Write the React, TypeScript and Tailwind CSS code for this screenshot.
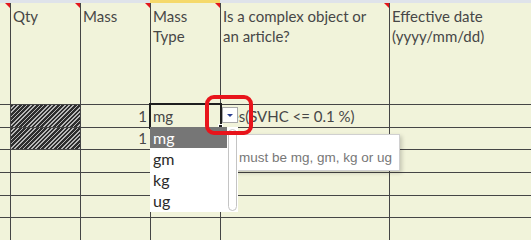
import React from 'react';

const line = 'border-[#454545]';

function Cell({ children, last, className = '' }: { children?: React.ReactNode; last?: boolean; className?: string }) {
  return (
    <div className={`relative border-b ${last ? '' : 'border-r'} ${line} ${className}`}>{children}</div>
  );
}

// red comment marker in the top-right corner of a header cell
function Marker() {
  return (
    <span className="absolute top-0 right-0 w-0 h-0 border-t-[5px] border-l-[5px] border-t-[#e3161b] border-l-transparent" />
  );
}

const hatch = 'bg-[repeating-linear-gradient(135deg,#2e2e2e_0_1.8px,#b8b8b8_1.8px_3px)]';

export default function App() {
  const emptyRows = [23, 23, 22, 23];

  return (
    <div className="relative w-[531px] h-[240px] overflow-hidden bg-[#f1f3da] text-[#474747] font-['Lato','Liberation_Sans',sans-serif] text-[15px]">
      {/* column header strip */}
      <div className="flex h-[3px]">
        <div className="w-[150px] bg-[#dfe3ea]" />
        <div className="w-[70px] bg-[#f5d96b]" />
        <div className="flex-1 bg-[#dfe3ea]" />
      </div>

      <div className="grid grid-cols-[11px_70px_70px_70px_169px_141px] grid-rows-[102px_23px_22px]">
        {/* header row */}
        <Cell><Marker /></Cell>
        <Cell className="pl-[2px] pt-[3px] leading-[20px]">Qty<Marker /></Cell>
        <Cell className="pl-[2px] pt-[3px] leading-[20px]">Mass<Marker /></Cell>
        <Cell className="pl-[2px] pt-[3px] leading-[20px]">Mass<br />Type<Marker /></Cell>
        <Cell className="pl-[2px] pt-[3px] leading-[20px]">Is a complex object or<br />an article?<Marker /></Cell>
        <Cell last className="pl-[2px] pt-[3px] leading-[20px]">Effective date<br />(yyyy/mm/dd)</Cell>

        {/* row 1 */}
        <Cell />
        <Cell className={hatch} />
        <Cell className="flex items-center justify-end pr-[3px]">1</Cell>
        <Cell className="flex items-center pl-[2px]">mg</Cell>
        <Cell className="flex items-center pl-[2px] whitespace-nowrap">Yes(SVHC &lt;= 0.1 %)</Cell>
        <Cell last />

        {/* row 2 */}
        <Cell />
        <Cell className={hatch} />
        <Cell className="flex items-center justify-end pr-[3px]">1</Cell>
        <Cell className="flex items-center pl-[2px]">mg</Cell>
        <Cell />
        <Cell last />
      </div>

      {emptyRows.map((h, i) => (
        <div key={i} className="grid grid-cols-[11px_70px_70px_70px_169px_141px]" style={{ height: h }}>
          <Cell />
          <Cell />
          <Cell />
          <Cell />
          <Cell />
          <Cell last />
        </div>
      ))}

      {/* selected cell outline + fill handle */}
      <div className="absolute left-[149px] top-[103px] w-[73px] h-[26px] border-2 border-[#1e1e1e]" />
      <div className="absolute left-[218px] top-[124px] w-[5px] h-[5px] bg-[#1e1e1e] border border-white" />

      {/* dropdown button */}
      <div className="absolute left-[222px] top-[107px] w-[16px] h-[16px] bg-white border border-[#a9a9a9] flex items-center justify-center">
        <span className="w-0 h-0 border-l-[3px] border-r-[3px] border-t-[3px] border-l-transparent border-r-transparent border-t-[#2b3f8f]" />
      </div>

      {/* input message tooltip */}
      <div className="absolute left-[228px] top-[134px] w-[172px] h-[37px] bg-white border border-[#d0d0d0] shadow-[2px_2px_4px_rgba(0,0,0,0.18)]">
        <div className="absolute left-[10px] top-[15px] whitespace-nowrap font-['Liberation_Sans',sans-serif] text-[13.5px] leading-[16px] text-[#777]">
          must be mg, gm, kg or ug
        </div>
      </div>

      {/* validation list */}
      <div className="absolute left-[150px] top-[127px] w-[88px] h-[85px] bg-white text-[#2a2a2a] text-[16px] leading-[21px]">
        <div className="w-[77px] h-[21px] pl-[3px] bg-[#767676] text-white">mg</div>
        <div className="pl-[3px]">gm</div>
        <div className="pl-[3px]">kg</div>
        <div className="pl-[3px]">ug</div>
        <div className="absolute left-[78px] top-[2px] w-[9px] h-[82px] rounded-full border border-[#c4c4c4] bg-white" />
      </div>

      {/* red highlight */}
      <div className="absolute left-[205px] top-[95px] w-[48px] h-[40px] rounded-[9px] border-4 border-[#e8141b]" />
    </div>
  );
}
